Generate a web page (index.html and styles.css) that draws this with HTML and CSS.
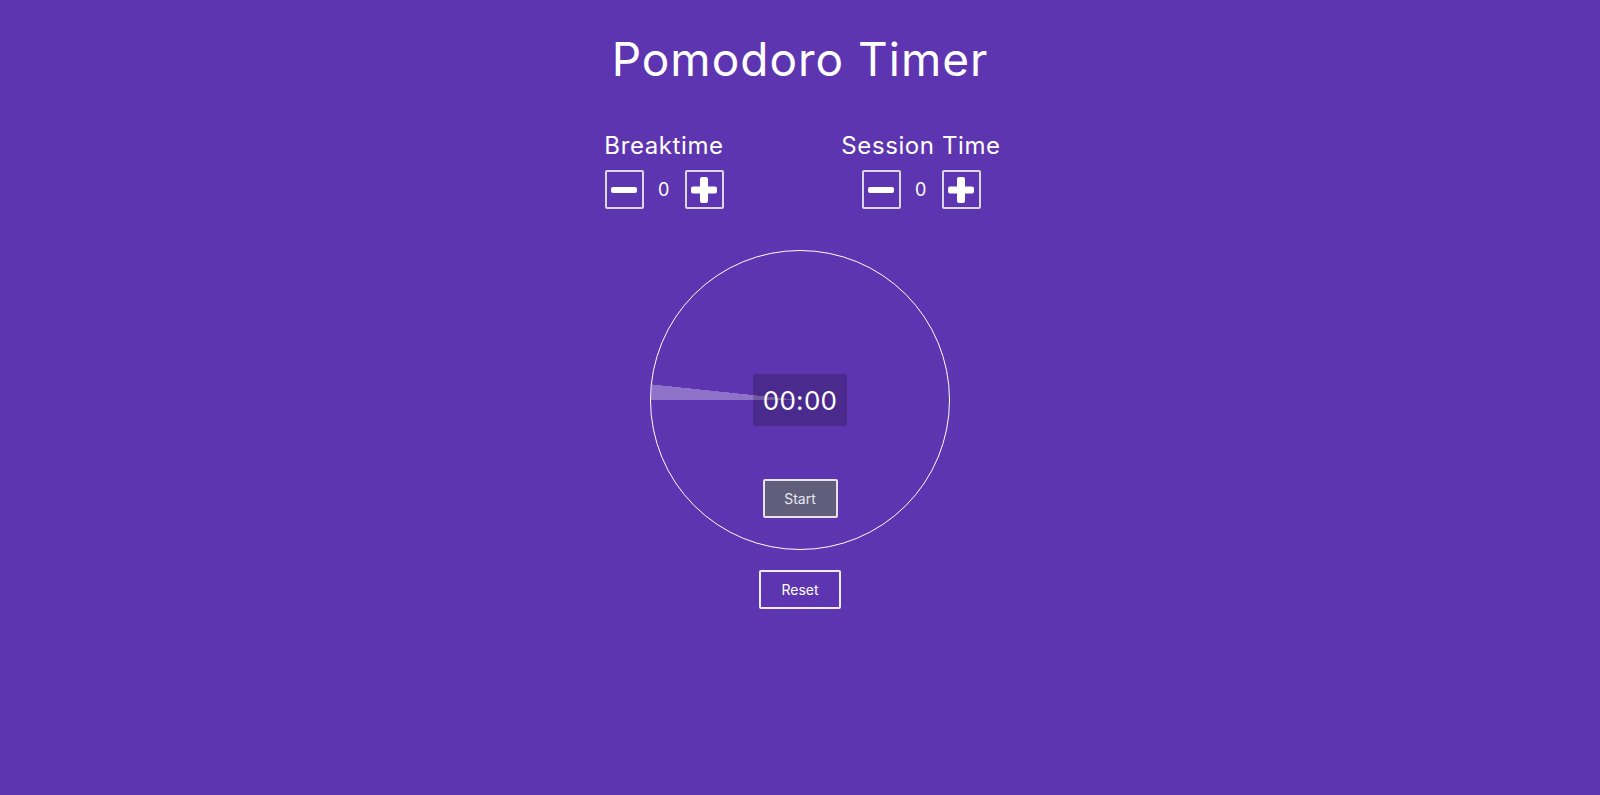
FILE: index.html
```html
<!DOCTYPE html>
<html lang="en">
<head>
<meta charset="utf-8">
<title>Pomodoro Timer</title>
<link rel="stylesheet" href="styles.css">
</head>
<body>
<main class="app">
  <h1 class="title">Pomodoro Timer</h1>
  <section class="settings">
    <div class="setting setting-break">
      <h2 class="label">Breaktime</h2>
      <div class="stepper">
        <button class="step" aria-label="decrease break">
          <svg class="icon" viewBox="0 0 26 26"><rect x="0" y="10" width="26" height="6" rx="2"/></svg>
        </button>
        <span class="value">0</span>
        <button class="step" aria-label="increase break">
          <svg class="icon" viewBox="0 0 26 26"><rect x="0" y="9.5" width="26" height="7" rx="2"/><rect x="9" y="0" width="8" height="26" rx="2"/></svg>
        </button>
      </div>
    </div>
    <div class="setting setting-session">
      <h2 class="label">Session Time</h2>
      <div class="stepper">
        <button class="step" aria-label="decrease session">
          <svg class="icon" viewBox="0 0 26 26"><rect x="0" y="10" width="26" height="6" rx="2"/></svg>
        </button>
        <span class="value">0</span>
        <button class="step" aria-label="increase session">
          <svg class="icon" viewBox="0 0 26 26"><rect x="0" y="9.5" width="26" height="7" rx="2"/><rect x="9" y="0" width="8" height="26" rx="2"/></svg>
        </button>
      </div>
    </div>
  </section>
  <div class="clock">
    <div class="wedge"></div>
    <div class="time">00:00</div>
    <button class="start">Start</button>
  </div>
  <button class="reset">Reset</button>
</main>
</body>
</html>
```
FILE: styles.css
```css
html, body {
  margin: 0;
  padding: 0;
}
body {
  background: #5e35b1;
  color: #fff;
  font-family: Inter, "Open Sans", sans-serif;
  min-height: 795px;
}
.app {
  display: flex;
  flex-direction: column;
  align-items: center;
  padding-top: 31px;
}
.title {
  margin: 0;
  font-size: 46px;
  line-height: 56px;
  font-weight: 400;
  letter-spacing: 1px;
}
.settings {
  display: grid;
  grid-template-columns: 124px 156px;
  column-gap: 117px;
  margin-top: 44px;
  margin-left: 1px;
}
.setting {
  display: flex;
  flex-direction: column;
  align-items: center;
}
.label {
  margin: 0;
  font-size: 24px;
  line-height: 30px;
  font-weight: 400;
  letter-spacing: 0.6px;
  white-space: nowrap;
}
.stepper {
  display: flex;
  align-items: center;
  margin-top: 9px;
}
.step {
  width: 39px;
  height: 39px;
  box-sizing: border-box;
  border: 2px solid #dcd6e8;
  border-radius: 2px;
  background: transparent;
  padding: 0;
  display: flex;
  align-items: center;
  justify-content: center;
}
.icon {
  width: 26px;
  height: 26px;
  fill: #fff;
}
.value {
  width: 41px;
  text-align: center;
  font-size: 18px;
  letter-spacing: 0.5px;
}
.clock {
  position: relative;
  width: 300px;
  height: 300px;
  box-sizing: border-box;
  border: 1px solid #fff;
  border-radius: 50%;
  margin-top: 41px;
  display: flex;
  flex-direction: column;
  align-items: center;
  padding-top: 123px;
}
.wedge {
  position: absolute;
  inset: 0;
  border-radius: 50%;
  background: conic-gradient(from 270deg, rgba(255,255,255,0.3) 0deg 6deg, transparent 6deg 360deg);
}
.time {
  position: relative;
  width: 94px;
  height: 52px;
  background: rgba(0, 0, 0, 0.2);
  border-radius: 3px;
  display: flex;
  align-items: center;
  justify-content: center;
  font-size: 26px;
  letter-spacing: 0.3px;
}
.start {
  position: relative;
  margin-top: 53px;
  width: 75px;
  height: 39px;
  box-sizing: border-box;
  background: #605e7b;
  border: 2px solid #e6e3ee;
  border-radius: 2px;
  color: #e6e6ee;
  font-family: inherit;
  font-size: 14px;
}
.reset {
  margin-top: 20px;
  width: 82px;
  height: 39px;
  box-sizing: border-box;
  background: transparent;
  border: 2px solid #f0ecf8;
  border-radius: 2px;
  color: #fff;
  font-family: inherit;
  font-size: 14px;
}
```
